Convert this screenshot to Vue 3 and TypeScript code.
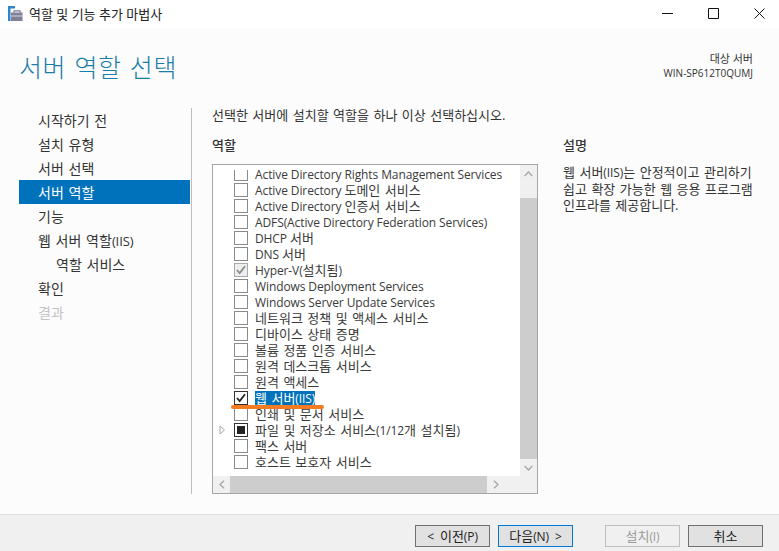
<script setup lang="ts">
type Mark = 'none' | 'checked' | 'installed' | 'partial'
interface Role { label: string; mark: Mark; clipped?: boolean; selected?: boolean; expand?: boolean }

const navItems = [
  { label: '시작하기 전' },
  { label: '설치 유형' },
  { label: '서버 선택' },
  { label: '서버 역할', active: true },
  { label: '기능' },
  { label: '웹 서버 역할(IIS)' },
  { label: '역할 서비스', sub: true },
  { label: '확인' },
  { label: '결과', disabled: true }
]

const roles: Role[] = [
  { label: 'Active Directory Rights Management Services', mark: 'none', clipped: true },
  { label: 'Active Directory 도메인 서비스', mark: 'none' },
  { label: 'Active Directory 인증서 서비스', mark: 'none' },
  { label: 'ADFS(Active Directory Federation Services)', mark: 'none' },
  { label: 'DHCP 서버', mark: 'none' },
  { label: 'DNS 서버', mark: 'none' },
  { label: 'Hyper-V(설치됨)', mark: 'installed' },
  { label: 'Windows Deployment Services', mark: 'none' },
  { label: 'Windows Server Update Services', mark: 'none' },
  { label: '네트워크 정책 및 액세스 서비스', mark: 'none' },
  { label: '디바이스 상태 증명', mark: 'none' },
  { label: '볼륨 정품 인증 서비스', mark: 'none' },
  { label: '원격 데스크톱 서비스', mark: 'none' },
  { label: '원격 액세스', mark: 'none' },
  { label: '웹 서버(IIS)', mark: 'checked', selected: true },
  { label: '인쇄 및 문서 서비스', mark: 'none' },
  { label: '파일 및 저장소 서비스(1/12개 설치됨)', mark: 'partial', expand: true },
  { label: '팩스 서버', mark: 'none' },
  { label: '호스트 보호자 서비스', mark: 'none' }
]

// Latin and Hangul runs are set at different sizes, as the original's font pairing does.
function runs(text: string): { text: string; latin: boolean }[] {
  return text
    .split(/([A-Za-z0-9()\/\-][A-Za-z0-9()\/\-\s]*)/)
    .filter((t) => t.length > 0)
    .map((t) => ({ text: t, latin: /^[A-Za-z0-9()\/\-]/.test(t) }))
}
</script>

<template>
  <div class="window">
    <header class="titlebar">
      <svg class="app-icon" width="15" height="15" viewBox="0 0 15 15">
        <path d="M0 0h7v2.500H2.500V15H0z" fill="#2f86cf" />
        <path d="M6 6.500V4.800h6v1.700" fill="none" stroke="#7b7b92" stroke-width="1.300" />
        <path d="M3 6.500h11.500V15H3z" fill="#7f7f98" />
        <path d="M3 10h11.500" stroke="#d5d5e0" stroke-width="1" />
      </svg>
      <span class="window-title">역할 및 기능 추가 마법사</span>
      <div class="controls">
        <svg width="11" height="11" viewBox="0 0 11 11"><path d="M0 5.500h11" stroke="#111" /></svg>
        <svg width="11" height="11" viewBox="0 0 11 11"><path d="M.5.500h10v10H.5z" fill="none" stroke="#111" /></svg>
        <svg width="11" height="11" viewBox="0 0 11 11"><path d="M.5.500l10 10M10.500.500l-10 10" fill="none" stroke="#111" /></svg>
      </div>
    </header>

    <section class="page-head">
      <h1>서버 역할 선택</h1>
      <div class="target">
        <div class="target-label">대상 서버</div>
        <div>WIN-SP612T0QUMJ</div>
      </div>
    </section>

    <section class="content">
      <nav class="steps">
        <div
          v-for="item in navItems"
          :key="item.label"
          class="step"
          :class="{ active: item.active, sub: item.sub, disabled: item.disabled }"
        ><span v-for="(run, i) in runs(item.label)" :key="i" :class="{ la: run.latin }">{{ run.text }}</span></div>
      </nav>

      <main class="main">
        <p class="intro">선택한 서버에 설치할 역할을 하나 이상 선택하십시오.</p>
        <div class="columns">
          <div class="roles-col">
            <h2>역할</h2>
            <div class="listbox">
              <div class="list-row">
                <div class="rows">
                  <div v-for="r in roles" :key="r.label" class="role">
                    <span class="expander">
                      <svg v-if="r.expand" width="7" height="10" viewBox="0 0 7 10"><path d="M1 1l4.500 4-4.500 4z" fill="#fff" stroke="#a6a6a6" /></svg>
                    </span>
                    <span class="box" :class="[r.mark, { clipped: r.clipped }]">
                      <svg v-if="r.mark === 'checked' || r.mark === 'installed'" width="10" height="10" viewBox="0 0 10 10"><path d="M1 5l2.700 3L9 1.200" fill="none" :stroke="r.mark === 'checked' ? '#222' : '#8a8a8a'" stroke-width="1.800" /></svg>
                      <span v-if="r.mark === 'partial'" class="fill"></span>
                    </span>
                    <span class="role-label" :class="{ selected: r.selected }"><span v-for="(run, i) in runs(r.label)" :key="i" :class="{ la: run.latin }">{{ run.text }}</span></span>
                  </div>
                </div>
                <div class="vscroll">
                  <div class="sb-btn up"><svg width="9" height="6" viewBox="0 0 9 6"><path d="M.7 5L4.500 1l3.800 4" fill="none" stroke="#a6a6a6" stroke-width="1.300" /></svg></div>
                  <div class="sb-thumb"></div>
                  <div class="sb-btn down"><svg width="9" height="6" viewBox="0 0 9 6"><path d="M.7 1l3.800 4 3.800-4" fill="none" stroke="#a6a6a6" stroke-width="1.300" /></svg></div>
                </div>
              </div>
              <div class="hscroll">
                <div class="hb-btn"><svg width="6" height="9" viewBox="0 0 6 9"><path d="M5 .7L1 4.500l4 3.800" fill="none" stroke="#a6a6a6" stroke-width="1.300" /></svg></div>
                <div class="hb-thumb"></div>
                <div class="hb-btn"><svg width="6" height="9" viewBox="0 0 6 9"><path d="M1 .7l4 3.800-4 3.800" fill="none" stroke="#a6a6a6" stroke-width="1.300" /></svg></div>
                <div class="corner"></div>
              </div>
              <div class="annotation"></div>
            </div>
          </div>
          <aside class="desc-col">
            <h2>설명</h2>
            <p class="desc">웹 서버<span class="la">(IIS)</span>는 안정적이고 관리하기<br />쉽고 확장 가능한 웹 응용 프로그램<br />인프라를 제공합니다.</p>
          </aside>
        </div>
      </main>
    </section>

    <footer class="footer">
      <button class="btn"><span class="la">&lt;&nbsp;&nbsp;</span>이전<span class="la">(P)</span></button>
      <button class="btn default">다음<span class="la">(N)&nbsp;&nbsp;&gt;</span></button>
      <button class="btn off" disabled>설치<span class="la">(I)</span></button>
      <button class="btn">취소</button>
    </footer>
  </div>
</template>

<style>
html, body { margin: 0; padding: 0; background: #fff; }
</style>

<style scoped>
.window {
  width: 779px;
  height: 551px;
  display: flex;
  flex-direction: column;
  overflow: hidden;
  background: #fcfcfc;
  font-family: "Open Sans", "Noto Sans CJK KR", sans-serif;
  font-size: 13px;
  word-spacing: 1.1px;
  color: #333;
}
.la { font-size: 12px; letter-spacing: -.1px; word-spacing: 0; }
.titlebar {
  height: 28px;
  flex: none;
  box-sizing: border-box;
  padding: 0 0 2px 8px;
  background: #fff;
  display: flex;
  align-items: center;
  color: #222;
}
.app-icon { margin-right: 6px; }
.window-title { word-spacing: 0; }
.controls {
  margin-left: auto;
  display: flex;
  gap: 35px;
  padding-right: 14px;
}
.page-head {
  height: 80px;
  flex: none;
  display: flex;
  justify-content: space-between;
  padding: 0 26px 0 19px;
  box-sizing: border-box;
}
h1 {
  margin: 21px 0 0;
  font-size: 25px;
  line-height: 36px;
  font-weight: 300;
  color: #1b7ea8;
  letter-spacing: .6px;
}
.target {
  margin-top: 24px;
  text-align: right;
  font-size: 10px;
  line-height: 14px;
  word-spacing: 0;
  color: #333;
}
.target-label { font-size: 11px; }
.content { flex: 1; display: flex; min-height: 0; }
.steps {
  width: 172px;
  margin-left: 19px;
  flex: none;
  height: 386px;
  border-right: 1px solid #bdbdbd;
}
.step {
  height: 24px;
  line-height: 25px;
  padding-left: 19px;
  font-size: 14px;
  width: 171px;
  box-sizing: border-box;
  color: #333;
}
.step .la { font-size: 13px; }
.step.active { background: #0072bc; color: #fff; }
.step.sub { padding-left: 37px; }
.step.disabled { color: #c4c4c4; }
.main { padding-left: 20px; flex: 1; min-width: 0; }
.intro { margin: -1px 0 0; line-height: 16px; color: #333; }
h2 {
  margin: 0;
  font-size: 13px;
  font-weight: 500;
  line-height: 16px;
  color: #333;
}
.columns { display: flex; margin-top: 14px; }
.roles-col { width: 326px; flex: none; }
.roles-col h2 { margin-bottom: 11px; }
.listbox {
  position: relative;
  width: 326px;
  height: 330px;
  box-sizing: border-box;
  border: 1px solid #a6a6a6;
  background: #fff;
  display: flex;
  flex-direction: column;
}
.list-row { flex: 1; display: flex; min-height: 0; }
.rows { flex: 1; min-width: 0; padding-top: 1px; overflow: hidden; }
.role { height: 16px; display: flex; align-items: center; }
.expander {
  width: 21px;
  flex: none;
  display: flex;
  justify-content: flex-end;
  padding-right: 8px;
  box-sizing: border-box;
}
.expander svg { display: block; }
.box {
  width: 14px;
  height: 14px;
  box-sizing: border-box;
  border: 1px solid #8a8a8a;
  background: #fff;
  flex: none;
  display: flex;
  align-items: center;
  justify-content: center;
}
.box.clipped { border-top: 0; height: 11px; margin-top: 3px; }
.box.installed { background: #eee; border-color: #a8a8a8; }
.box.checked, .box.partial { border-color: #333; }
.fill { width: 8px; height: 8px; background: #222; }
.role-label {
  margin-left: 7px;
  line-height: 15px;
  white-space: pre;
  color: #3a3a3a;
}
.role-label.selected { background: #0072bc; color: #fff; }
.vscroll {
  width: 17px;
  flex: none;
  display: flex;
  flex-direction: column;
  background: #f0f0f0;
}
.sb-btn { display: flex; align-items: center; justify-content: center; height: 17px; flex: none; }
.sb-btn.up { height: 33px; align-items: flex-start; padding-top: 6px; box-sizing: border-box; }
.sb-thumb { flex: 1; background: #cdcdcd; }
.hscroll { height: 17px; flex: none; display: flex; background: #f0f0f0; }
.hb-btn { width: 17px; display: flex; align-items: center; justify-content: center; flex: none; }
.hb-thumb { width: 257px; background: #cdcdcd; }
.corner { flex: 1; background: #f0f0f0; }
.annotation {
  position: absolute;
  left: 18px;
  top: 240px;
  width: 93px;
  height: 4px;
  border-radius: 2px;
  background: #f57c20;
}
.desc-col { margin-left: 25px; flex: 1; }
.desc { margin: 11px 0 0; line-height: 16px; color: #333; }
.footer {
  height: 37px;
  flex: none;
  box-sizing: border-box;
  border-top: 1px solid #dfdfdf;
  background: #f0f0f0;
  display: flex;
  align-items: flex-start;
  padding: 10px 16px 0 415px;
  gap: 8px;
}
.btn {
  width: 75px;
  height: 22px;
  padding: 0;
  box-sizing: border-box;
  border: 1px solid #707070;
  background: #e1e1e1;
  font-family: inherit;
  font-size: 13px;
  line-height: 18px;
  color: #222;
  border-radius: 0;
}
.btn.default { border-color: #0078d7; }
.btn.off { margin-left: 24px; background: #f0f0f0; border-color: #bfbfbf; color: #9a9a9a; }
</style>
